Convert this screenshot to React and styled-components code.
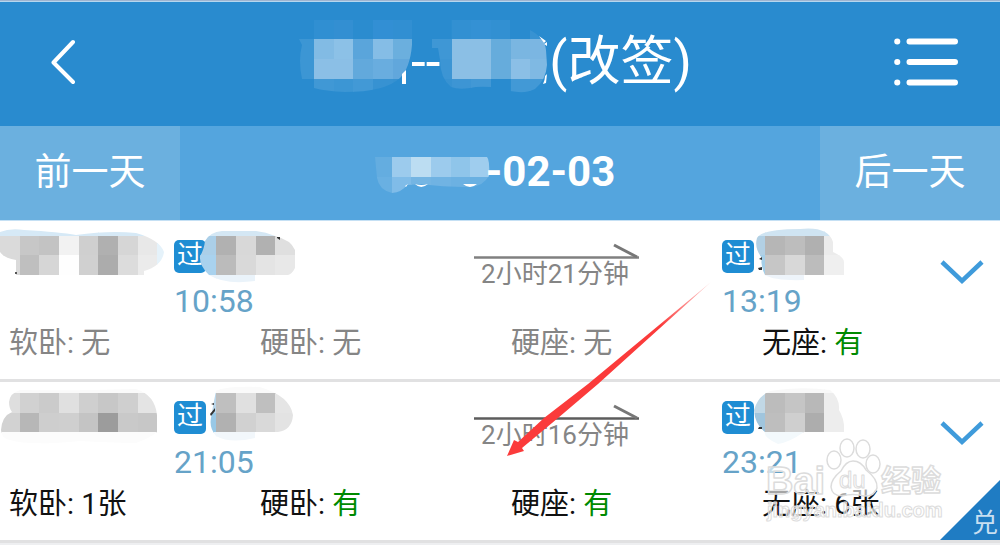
import React, { useId } from 'react';
import styled, { createGlobalStyle } from 'styled-components';

const CELL = 19.67;

const masks = {
  from: {
    view: [300, 22, 111, 80],
    origin: [294.3, 19.7],
    path:
      'M299 39L314 39V20H412V45Q410 68 400 78Q385 92 345 92Q325 91 314 88V79H302Q298 60 302 45Z',
    rows: [
      ['#328fd1', '#308fd2', '#338fd2', '#2b8ccf', '#328fd4', '#318fd2'],
      ['#3c96d4', '#82bbe4', '#8cc1e7', '#5aa5db', '#85bde6', '#6bafde'],
      ['#3c96d4', '#8bbfe6', '#8bbfe6', '#62a9dc', '#69addf', '#61a7dc'],
      ['#3f96d5', '#4098d5', '#3c96d4', '#4299d6', '#3792d2', '#3591d1'],
    ],
    marks: 'M402 74L406 70V84H402Z',
    markColor: '#fff',
  },
  to: {
    view: [440, 22, 109, 80],
    origin: [432, 19.7],
    path:
      'M432 39H451V20H415Q470 13 513 14L518 19H510V39H530V30Q545 38 546 50L547 65Q546 80 535 89Q526 94 510 91V79H491V87Q478 86 470 88Q458 90 451 87Q440 78 440 60L438 48H432Z',
    rows: [
      ['#2b8dd0', '#3290d2', '#3491d4', '#3290d2', '#2b8dd0', '#3792d2'],
      ['#3f97d5', '#8bbfe5', '#8bbfe5', '#66acdc', '#7ab6e1', '#7bb6e2'],
      ['#3c95d4', '#8bbfe5', '#8bbfe5', '#66acdc', '#8bbfe6', '#7fb9e3'],
      ['#3792d2', '#3d95d4', '#4298d5', '#2b8dd0', '#4299d6', '#4299d6'],
    ],
    marks: 'M539 36L546 41L544 43ZM544 44L547 42V46ZM547 74L546 83L543 84Q545 80 545 76Z',
    markColor: '#fff',
  },
  year: {
    view: [376, 150, 111, 42],
    origin: [373, 157],
    path:
      'M376 157H488Q491 160 490 176Q484 186 472 187Q440 187 424 184L408 185Q403 192 393 193Q380 190 378 178Z',
    rows: [
      ['#64ade0', '#9ccbed', '#bcddf2', '#9ccbed', '#8fc5ea', '#9fcdee'],
      ['#69b0e2', '#80bce8', '#74b5e3', '#70b3e3', '#6cb1e2', '#69b0e2'],
    ],
    marks: 'M406 186L409 184L407 187ZM416 184Q422 186 429 184Q422 190 416 184ZM464 184L478 184Q471 190 464 184Z',
    markColor: '#fff',
  },
  train1: {
    view: [0, 240, 164, 33],
    origin: [0, 216],
    path:
      'M0 232Q10 228 24 230Q60 232 76 235Q110 230 136 233Q160 240 164 252Q162 266 144 271V275H16V260Q4 258 0 252Z',
    rows: [
      Array(9).fill('#d6e9f6'),
      ['#dadada', '#c7c7c7', '#c3c3c3', '#f2f2f2', '#cfcfcf', '#b0b0b0', '#d6d6d6', '#e8e8e8', '#e5f2fa'],
      ['#dadada', '#bfbfbf', '#d6d6d6', '#fefefe', '#d0d0d0', '#acacac', '#dcdcdc', '#ebebeb', '#e5f2fa'],
    ],
    marks: 'M15 272H17V274H15Z',
    markColor: '#555',
  },
  start1: {
    view: [174, 240, 122, 33],
    origin: [196.7, 216],
    path:
      'M205 241Q210 232 222 231H256Q266 232 275 236Q291 240 295 250V268Q292 274 288 275H255V281Q225 285 209 275Q199 265 200 256Q204 250 205 241Z',
    rows: [
      Array(5).fill('#d4e7f4'),
      ['#abcfe8', '#b1b1b1', '#d8d8d8', '#b1b1b1', '#dfdfdf'],
      ['#a9d2ee', '#bbbbbb', '#d9d9d9', '#e4e4e4', '#e8e8e8'],
      Array(5).fill('#eaf3fa'),
    ],
    marks: 'M277 237H280V240L277 238Z',
    markColor: '#333',
  },
  end1: {
    view: [722, 240, 122, 33],
    origin: [745.7, 216],
    path:
      'M757 238Q762 229 800 229Q828 226 833 242V252Q844 257 844 262V275H804V280Q775 281 765 275Q760 265 762 258Q754 248 757 238Z',
    rows: [
      Array(5).fill('#cfe4f2'),
      ['#b2d0e4', '#b6b6b6', '#bdbdbd', '#b0b0b0', '#ebebeb'],
      ['#a5cfe8', '#c6c6c6', '#d8d8d8', '#bcbcbc', '#efefef'],
      Array(5).fill('#eef4fa'),
    ],
    marks: 'M759 259L762 257V260ZM758 268L762 267V270H759Z',
    markColor: '#333',
  },
  train2: {
    view: [0, 401, 164, 33],
    origin: [0, 373.2],
    path:
      'M9 402Q10 393 20 390Q70 391 136 389Q155 395 157 415V432Q150 438 136 443Q120 443 80 441Q30 446 10 440Q1 438 1 430Q2 416 12 412Q9 408 9 402Z',
    rows: [
      Array(8).fill('#fafafa'),
      ['#dedede', '#d1d1d1', '#cbcbcb', '#e0e0e0', '#cfcfcf', '#c7c7c7', '#cfcfcf', '#e4e4e4'],
      ['#d2d2d2', '#b7b7b7', '#cecece', '#cfcfcf', '#c4c4c4', '#9c9c9c', '#c9c9c9', '#c7c7c7'],
      Array(8).fill('#fcfcfc'),
    ],
  },
  start2: {
    view: [174, 401, 122, 33],
    origin: [196.7, 373.2],
    path:
      'M216 391Q225 386 260 387Q290 396 293 415Q292 430 278 432H255V438Q230 444 216 436Q209 428 211 418Q213 405 216 391Z',
    rows: [
      Array(5).fill('#fafafa'),
      ['#b9d6ea', '#bfbfbf', '#e0e0e0', '#bfbfbf', '#e5e5e5'],
      ['#98c8e6', '#b1b1b1', '#d1d1d1', '#d9d9d9', '#e3e3e3'],
      Array(5).fill('#f2f7fb'),
    ],
    marks: 'M211 404L214 403V405ZM210 414L215 408V411L211 416Z',
    markColor: '#333',
  },
  end2: {
    view: [722, 401, 122, 33],
    origin: [745.7, 373.2],
    path:
      'M754 410Q758 396 770 391Q800 386 830 390Q840 398 839 410Q845 420 844 432H804Q790 442 778 444Q764 438 765 432Q755 425 754 410Z',
    rows: [
      Array(5).fill('#f8f8f8'),
      ['#c1d8e6', '#bcbcbc', '#c5c5c5', '#b8b8b8', '#ededed'],
      ['#a0c5dd', '#bebebe', '#cfcfcf', '#adadad', '#ededed'],
      Array(5).fill('#f3f9fc'),
    ],
    marks: 'M759 427H762V429H758Z',
    markColor: '#333',
  },
};

const trains = [
  {
    id: 1,
    train: 'train1',
    start: 'start1',
    end: 'end1',
    startTime: '10:58',
    endTime: '13:19',
    duration: '2小时21分钟',
    line: '#808080',
    seats: [
      { name: '软卧', left: '无' },
      { name: '硬卧', left: '无' },
      { name: '硬座', left: '无' },
      { name: '无座', left: '有' },
    ],
  },
  {
    id: 2,
    train: 'train2',
    start: 'start2',
    end: 'end2',
    startTime: '21:05',
    endTime: '23:21',
    duration: '2小时16分钟',
    line: '#5c5c5c',
    seats: [
      { name: '软卧', left: '1张' },
      { name: '硬卧', left: '有' },
      { name: '硬座', left: '有' },
      { name: '无座', left: '6张' },
    ],
    exchange: true,
    watermark: true,
  },
];

const Mosaic = ({ name, className }) => {
  const id = useId();
  const { view, origin, path, rows, marks, markColor } = masks[name];
  return (
    <svg
      className={className}
      width={view[2]}
      height={view[3]}
      viewBox={view.join(' ')}
      overflow="visible"
      aria-hidden="true"
    >
      <clipPath id={id}>
        <path d={path} />
      </clipPath>
      <g clipPath={`url(#${id})`} shapeRendering="crispEdges">
        {rows.map((row, r) =>
          row.map((color, c) => (
            <rect
              key={`${r}-${c}`}
              x={origin[0] + c * CELL}
              y={origin[1] + r * CELL}
              width={CELL + 0.3}
              height={CELL + 0.3}
              fill={color}
            />
          )),
        )}
      </g>
      {marks && <path d={marks} fill={markColor} />}
    </svg>
  );
};

const Watermark = () => (
  <WatermarkSvg width="184" height="92" viewBox="765 435 184 92" aria-hidden="true">
    <g fill="#fff" fillOpacity="0.65" stroke="#dcdcdc" strokeWidth="1.5" strokeLinejoin="round">
      <ellipse cx="834" cy="459" rx="7" ry="9" />
      <ellipse cx="847" cy="447" rx="7" ry="9" />
      <ellipse cx="863" cy="448" rx="7" ry="9" />
      <ellipse cx="873" cy="463" rx="7" ry="9" />
      <path d="M853 460Q861 460 866 469Q878 478 877 487Q874 496 864 495Q853 492 842 495Q832 495 831 486Q831 478 841 470Q846 460 853 460Z" />
      <text x="766" y="493" fontSize="38" fontWeight="700">
        Bai
      </text>
      <text x="839" y="487" fontSize="24" strokeWidth="1">
        du
      </text>
      <text x="881" y="490" fontSize="30" fontWeight="700">
        经验
      </text>
      <text x="767" y="516" fontSize="20" fontWeight="700" strokeWidth="1">
        jingyan.baidu.com
      </text>
    </g>
  </WatermarkSvg>
);

const TrainItem = ({ item }) => (
  <Item>
    <Info>
      <Cell>
        <Mask name={item.train} />
      </Cell>
      <Cell>
        <Badge>过</Badge>
        <Mask name={item.start} />
        <Time>{item.startTime}</Time>
      </Cell>
      <Cell>
        <Arrow width="165" height="19" viewBox="0 0 165 19" aria-hidden="true">
          <path d="M0 17.5H165" stroke={item.line} strokeWidth="2.5" />
          <path d="M140 5L163 17" stroke="#777" strokeWidth="3" />
        </Arrow>
        <Duration>{item.duration}</Duration>
      </Cell>
      <Cell>
        <Badge>过</Badge>
        <Mask name={item.end} />
        <Time>{item.endTime}</Time>
      </Cell>
      <ExpandButton type="button" aria-label="展开">
        <svg width="44" height="25" viewBox="0 0 44 25" fill="none">
          <path d="M2 2L22 21L42 2" stroke="#3f9bdb" strokeWidth="4.5" />
        </svg>
      </ExpandButton>
    </Info>
    <Seats>
      {item.seats.map(s => (
        <Seat key={s.name} $empty={s.left === '无'}>
          {s.name}: <Left $enough={s.left === '有'}>{s.left}</Left>
        </Seat>
      ))}
    </Seats>
    {item.watermark && <Watermark />}
    {item.exchange && <Corner>兑</Corner>}
  </Item>
);

const App = () => (
  <Page>
    <GlobalStyle />
    <Header>
      <IconButton type="button" aria-label="返回" $side="left">
        <svg width="24" height="46" viewBox="0 0 24 46" fill="none">
          <path d="M22 3L2.5 23.5L22 43" stroke="#fff" strokeWidth="4" strokeLinecap="round" strokeLinejoin="round" />
        </svg>
      </IconButton>
      <Title>
        <Mosaic name="from" />
        --
        <Mosaic name="to" />
        (改签)
      </Title>
      <IconButton type="button" aria-label="菜单" $side="right">
        <svg width="64" height="48" viewBox="0 0 64 48" stroke="#fff" strokeWidth="6" strokeLinecap="round">
          <path d="M3.2 3.5H3.3M3.2 24H3.3M3.2 44.5H3.3M15.5 3.5H61M15.5 24H61M15.5 44.5H61" />
        </svg>
      </IconButton>
    </Header>
    <DateBar>
      <DayButton type="button">前一天</DayButton>
      <CurrentDate>
        <Mosaic name="year" />
        -02-03
      </CurrentDate>
      <DayButton type="button">后一天</DayButton>
    </DateBar>
    <List>
      {trains.map(t => (
        <TrainItem key={t.id} item={t} />
      ))}
      <Pointer width="212" height="176" viewBox="500 281 212 176" aria-hidden="true">
        <defs>
          <linearGradient id="fade" x1="1" y1="0" x2="0" y2="1">
            <stop offset="0" stopColor="#fb3b3b" stopOpacity="0.2" />
            <stop offset="0.25" stopColor="#fb3b3b" />
          </linearGradient>
        </defs>
        <path d="M711 282L588 384L544 418L518 442L514 440L507 456L524 451L522 448L558 418L598 384Z" fill="url(#fade)" />
      </Pointer>
    </List>
  </Page>
);

const GlobalStyle = createGlobalStyle`
  * {
    box-sizing: border-box;
  }
  body {
    margin: 0;
    background: #eeeff1;
    font-family: Roboto, 'Noto Sans CJK SC', sans-serif;
  }
  button {
    padding: 0;
    border: 0;
    background: none;
    font-family: inherit;
    cursor: pointer;
  }
  svg {
    display: block;
    flex: none;
  }
`;

const Page = styled.div`
  border-top: 1px solid #9fb4d0;
  overflow: hidden;
`;

const Header = styled.header`
  display: grid;
  grid-template-columns: 180px 1fr 180px;
  align-items: center;
  height: 125px;
  padding-bottom: 4px;
  border-top: 1px solid #b5d7ef;
  background: #298bcf;
`;

const IconButton = styled.button`
  display: flex;
  justify-self: ${props => (props.$side === 'left' ? 'start' : 'end')};
  margin: 0 42px 0 51px;
`;

const Title = styled.h1`
  display: flex;
  align-items: center;
  justify-content: center;
  margin: 0;
  padding-right: 8px;
  color: #fff;
  font-size: 53px;
  font-weight: 400;
  line-height: 60px;
  white-space: nowrap;
`;

const DateBar = styled.div`
  display: grid;
  grid-template-columns: 180px 1fr 180px;
  height: 95px;
  border-bottom: 1px solid #c5e0f4;
  background: #54a5de;
`;

const DayButton = styled.button`
  padding-bottom: 8px;
  background: #6bb0df;
  color: #fff;
  font-size: 37px;
`;

const CurrentDate = styled.div`
  display: flex;
  align-items: center;
  justify-content: center;
  padding: 0 10px 4px 0;
  color: #fff;
  font-size: 42px;
  font-weight: 700;
`;

const List = styled.main`
  position: relative;
`;

const Item = styled.section`
  position: relative;
  padding: 19px 0 16px;
  border-bottom: 3px solid #e1e1e2;
  background: #fff;
`;

const Info = styled.div`
  display: grid;
  grid-template-columns: 17.4% 30% 24.8% 1fr 60px;
`;

const Cell = styled.div`
  position: relative;
`;

const Mask = styled(Mosaic)`
  position: absolute;
  top: 0;
  left: 0;
`;

const Badge = styled.span`
  display: block;
  width: 32px;
  height: 33px;
  border-radius: 5px;
  background: #1f8dd3;
  color: #fff;
  font-size: 26px;
  line-height: 31px;
  text-align: center;
`;

const Time = styled.div`
  margin-top: 10px;
  color: #66a3c8;
  font-size: 32px;
  line-height: 36px;
`;

const Arrow = styled.svg`
  overflow: visible;
`;

const Duration = styled.div`
  width: 162px;
  color: #858585;
  font-size: 26px;
  line-height: 30px;
  text-align: center;
  white-space: nowrap;
`;

const ExpandButton = styled.button`
  display: flex;
  align-self: start;
  margin-top: 20px;
`;

const Seats = styled.div`
  display: grid;
  grid-template-columns: repeat(3, 25.1%) 1fr;
  margin-top: 4px;
`;

const Seat = styled.div`
  padding-left: 9px;
  color: ${props => (props.$empty ? '#858585' : '#111')};
  font-size: 29px;
  line-height: 40px;
  white-space: nowrap;
`;

const Left = styled.span`
  color: ${props => (props.$enough ? '#008a00' : 'inherit')};
`;

const Corner = styled.span`
  position: absolute;
  right: 0;
  bottom: 0;
  width: 60px;
  height: 60px;
  padding: 29px 0 0 32px;
  background: #1f7cc3;
  clip-path: polygon(100% 0, 100% 100%, 0 100%);
  color: #c8dff1;
  font-size: 26px;
  line-height: 28px;
`;

const WatermarkSvg = styled.svg`
  position: absolute;
  right: 51px;
  bottom: 12px;
  font-family: 'Liberation Sans', 'Noto Sans CJK SC', sans-serif;
`;

const Pointer = styled.svg`
  position: absolute;
  top: 60px;
  left: 50%;
  pointer-events: none;
`;

export default App;
